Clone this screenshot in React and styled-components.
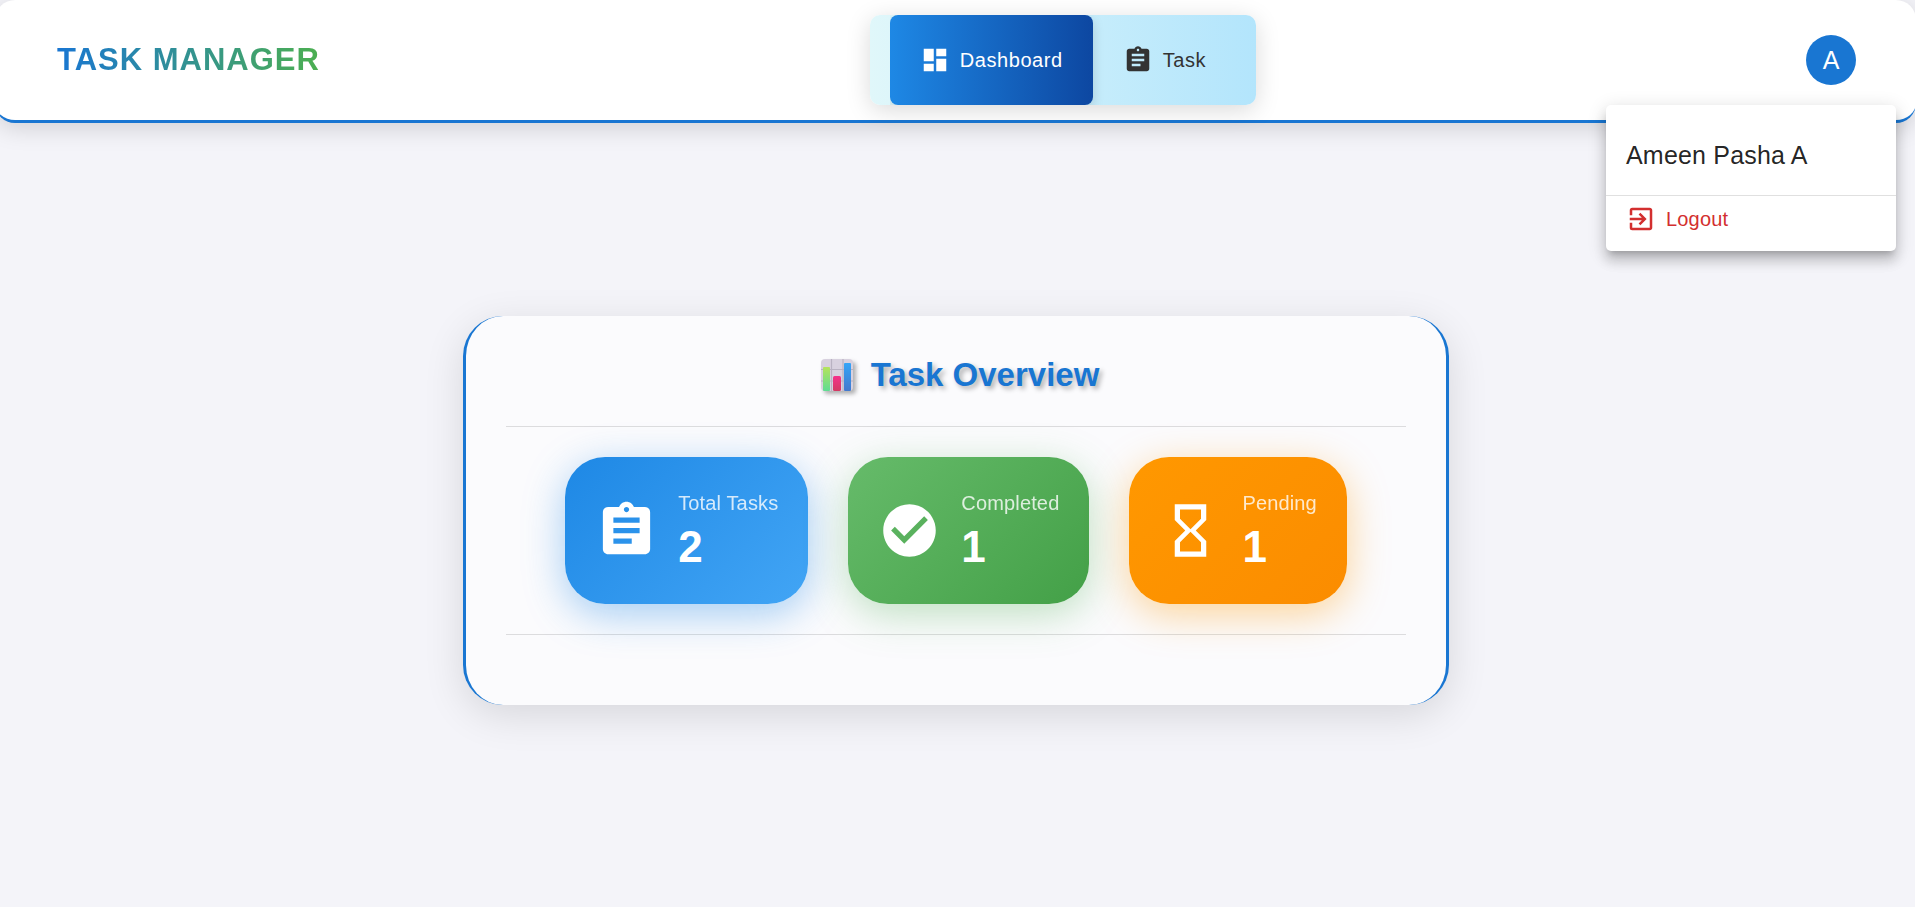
import React from "react";
import styled, { createGlobalStyle } from "styled-components";
import {
  MdAssignment,
  MdCheckCircle,
  MdDashboard,
  MdExitToApp,
  MdHourglassEmpty,
} from "react-icons/md";

const GlobalStyle = createGlobalStyle`
  *, *::before, *::after { box-sizing: border-box; }
  body {
    margin: 0;
    background: #f4f4f9;
    color: rgba(0, 0, 0, 0.87);
    font-family: "Liberation Sans", Arial, sans-serif;
    font-size: 20px;
    overflow-x: hidden;
  }
`;

const Header = styled.header`
  display: flex;
  align-items: center;
  justify-content: space-between;
  min-height: 123px;
  margin: 0 -1px 0 -5px;
  padding: 15px 60px 15px 62px;
  background: #fff;
  border-bottom: 3px solid #1976d2;
  border-radius: 20px;
  box-shadow: 0 5px 25px rgba(0, 0, 0, 0.15);
`;

const Brand = styled.div`
  font-size: 31px;
  font-weight: 700;
  line-height: 40px;
  letter-spacing: 1px;
  color: transparent;
  background: linear-gradient(90deg, #1976d2, #4caf50);
  background-clip: text;
`;

const Nav = styled.nav`
  padding: 0 20px;
  border-radius: 10px;
  background: linear-gradient(90deg, #e0f7fa, #b3e5fc);
  box-shadow: 0 5px 25px rgba(0, 0, 0, 0.15);
`;

const NavList = styled.div`
  display: flex;
  overflow: hidden;
`;

const NavLink = styled.a`
  display: flex;
  align-items: center;
  gap: 10px;
  height: 90px;
  padding: 0 30px;
  border-radius: 8px;
  letter-spacing: 0.02857em;
  text-decoration: none;
  color: ${(p) => (p.$active ? "#fff" : "#333")};
  background: ${(p) =>
    p.$active ? "linear-gradient(90deg, #1e88e5, #0d47a1)" : "none"};
  box-shadow: ${(p) => (p.$active ? "0 4px 12px rgba(0, 0, 0, 0.15)" : "none")};
`;

const Account = styled.div`
  position: relative;
`;

const Avatar = styled.button`
  display: flex;
  align-items: center;
  justify-content: center;
  width: 50px;
  height: 50px;
  padding: 0;
  border: 0;
  border-radius: 50%;
  background: #1976d2;
  color: #fff;
  font: inherit;
  font-size: 25px;
  cursor: pointer;
`;

const Menu = styled.div`
  position: absolute;
  z-index: 10;
  top: 70px;
  right: -40px;
  width: 290px;
  padding-bottom: 9px;
  border-radius: 5px;
  background: #fff;
  box-shadow:
    0 6px 6px -4px rgba(0, 0, 0, 0.2),
    0 10px 12px 1px rgba(0, 0, 0, 0.14),
    0 4px 18px 2px rgba(0, 0, 0, 0.12);
`;

const UserName = styled.div`
  padding: 30px 20px 20px;
  border-bottom: 1px solid rgba(0, 0, 0, 0.12);
  font-size: 25px;
  line-height: 40px;
  letter-spacing: 0.0075em;
`;

const MenuButton = styled.button`
  display: flex;
  align-items: center;
  gap: 10px;
  width: 100%;
  padding: 8px 20px;
  border: 0;
  background: none;
  color: #d32f2f;
  font: inherit;
  line-height: 30px;
  letter-spacing: 0.00938em;
  cursor: pointer;
`;

const Main = styled.main`
  display: flex;
  align-items: center;
  justify-content: center;
  min-height: calc(100vh - 132px);
  padding-right: 3px;
`;

const Panel = styled.section`
  width: 100%;
  max-width: 986px;
  padding: 40px;
  border: solid #1976d2;
  border-width: 0 3px;
  border-radius: 40px;
  background: #fbfbfd;
  box-shadow: 0 10px 40px rgba(0, 0, 0, 0.12);
`;

const PanelTitle = styled.h1`
  display: flex;
  align-items: center;
  justify-content: center;
  gap: 10px;
  margin: 0 0 32px;
  font-size: 33px;
  font-weight: 700;
  line-height: 38px;
  color: #1976d2;
  text-shadow: 3px 3px 5px rgba(0, 0, 0, 0.3);

  svg {
    filter: drop-shadow(3px 3px 2px rgba(0, 0, 0, 0.3));
  }
`;

const Divider = styled.hr`
  height: 1px;
  margin: 0 0 30px;
  border: 0;
  background: rgba(0, 0, 0, 0.12);
`;

const Stats = styled.div`
  display: flex;
  flex-wrap: wrap;
  justify-content: center;
  gap: 40px;
  margin-bottom: 30px;
`;

const StatCard = styled.article`
  display: flex;
  align-items: center;
  gap: 20px;
  padding: 30px;
  border-radius: 40px;
  color: #fff;
  background: linear-gradient(135deg, ${(p) => p.$from}, ${(p) => p.$to});
  box-shadow: 0 10px 40px ${(p) => p.$glow};
`;

const StatLabel = styled.div`
  line-height: 33px;
  letter-spacing: 0.0075em;
  opacity: 0.8;
`;

const StatValue = styled.div`
  font-size: 44px;
  font-weight: 700;
  line-height: 54px;
`;

const stats = [
  { label: "Total Tasks", value: 2, Icon: MdAssignment, from: "#1e88e5", to: "#42a5f5", glow: "rgba(30, 136, 229, 0.4)" },
  { label: "Completed", value: 1, Icon: MdCheckCircle, from: "#66bb6a", to: "#43a047", glow: "rgba(76, 175, 80, 0.35)" },
  { label: "Pending", value: 1, Icon: MdHourglassEmpty, from: "#ff9800", to: "#fb8c00", glow: "rgba(255, 152, 0, 0.4)" },
];

function ChartIcon() {
  return (
    <svg width="48" height="34" viewBox="0 0 48 34" aria-hidden="true">
      <defs>
        <linearGradient id="lime" x1="0" y1="0" x2="0" y2="1">
          <stop offset="0" stopColor="#b5e35c" />
          <stop offset="1" stopColor="#5fdc94" />
        </linearGradient>
        <linearGradient id="pink" x1="0" y1="0" x2="0" y2="1">
          <stop offset="0" stopColor="#f5318c" />
          <stop offset="1" stopColor="#d33a63" />
        </linearGradient>
        <linearGradient id="sky" x1="0" y1="0" x2="0" y2="1">
          <stop offset="0" stopColor="#35a5f7" />
          <stop offset="1" stopColor="#4379cd" />
        </linearGradient>
      </defs>
      <rect x="8" y="1" width="32" height="32" rx="4" fill="#d8d1df" />
      <path d="M18.500 1v32M30 1v32M8 11.500h32M8 23h32" stroke="#b9b2c2" strokeWidth="1.200" />
      <rect x="10" y="9" width="7" height="24" rx="1" fill="url(#lime)" />
      <rect x="20" y="18" width="8" height="15" rx="1.500" fill="url(#pink)" />
      <rect x="31" y="5" width="7" height="28" rx="1" fill="url(#sky)" />
    </svg>
  );
}

export default function App() {
  return (
    <>
      <GlobalStyle />
      <Header>
        <Brand>TASK MANAGER</Brand>
        <Nav aria-label="Main">
          <NavList>
            <NavLink href="#dashboard" $active aria-current="page">
              <MdDashboard size={30} aria-hidden="true" />
              Dashboard
            </NavLink>
            <NavLink href="#task">
              <MdAssignment size={30} aria-hidden="true" />
              Task
            </NavLink>
          </NavList>
        </Nav>
        <Account>
          <Avatar type="button" aria-haspopup="true" aria-expanded="true">A</Avatar>
          <Menu>
            <UserName>Ameen Pasha A</UserName>
            <MenuButton type="button">
              <MdExitToApp size={30} aria-hidden="true" />
              Logout
            </MenuButton>
          </Menu>
        </Account>
      </Header>
      <Main>
        <Panel>
          <PanelTitle>
            <ChartIcon />
            Task Overview
          </PanelTitle>
          <Divider />
          <Stats>
            {stats.map(({ label, value, Icon, from, to, glow }) => (
              <StatCard key={label} $from={from} $to={to} $glow={glow}>
                <Icon size={63} aria-hidden="true" />
                <div>
                  <StatLabel>{label}</StatLabel>
                  <StatValue>{value}</StatValue>
                </div>
              </StatCard>
            ))}
          </Stats>
          <Divider />
        </Panel>
      </Main>
    </>
  );
}
